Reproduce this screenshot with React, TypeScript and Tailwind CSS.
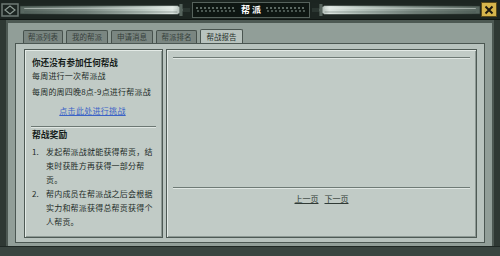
import React from "react";

const font = { fontFamily: '"Noto Sans CJK SC", "Noto Sans", sans-serif' };

function Sword({ flip }: { flip?: boolean }) {
  const id = flip ? "sg2" : "sg1";
  return (
    <svg width="100%" height="14" viewBox="0 0 160 14" preserveAspectRatio="none" style={flip ? { transform: "scaleX(-1)" } : undefined}>
      <defs>
        <linearGradient id={id} x1="0" x2="1" y1="0" y2="0">
          <stop offset="0" stopColor="#56655e" />
          <stop offset="0.4" stopColor="#7d8c85" />
          <stop offset="0.75" stopColor="#b9c7c0" />
          <stop offset="0.92" stopColor="#dfe8e3" />
          <stop offset="1" stopColor="#8a9992" />
        </linearGradient>
      </defs>
      <rect x="0" y="0" width="160" height="14" fill="#1d2622" />
      <polygon points="0,3 148,2.5 156,7 148,11.5 0,11" fill={`url(#${id})`} />
      <polygon points="0,3 148,2.5 156,7 148,11.5 0,11" fill="none" stroke="#2a3530" strokeWidth="0.6" />
      <line x1="4" y1="5.5" x2="148" y2="5" stroke="#eef4f0" strokeOpacity="0.6" strokeWidth="0.8" />
      <line x1="4" y1="9" x2="148" y2="9" stroke="#3d4a44" strokeOpacity="0.5" strokeWidth="0.8" />
      <rect x="150" y="1" width="3" height="12" fill="#56645d" />
      <rect x="153" y="5" width="7" height="4" fill="#2b3631" />
    </svg>
  );
}

function Dots() {
  return (
    <svg width="40" height="6" viewBox="0 0 40 6">
      {Array.from({ length: 10 }).map((_, i) => (
        <g key={i}>
          <rect x={i * 4} y="0" width="2" height="2" fill="#5b6862" />
          <rect x={i * 4 + 1} y="3" width="2" height="2" fill="#4a5751" />
        </g>
      ))}
    </svg>
  );
}

const tabs = [
  { t: "帮派列表", w: "w-[40px]" },
  { t: "我的帮派", w: "w-[42px]" },
  { t: "申请消息", w: "w-[42px]" },
  { t: "帮派排名", w: "w-[41px]" },
];

export default function App() {
  return (
    <div className="w-[500px] h-[256px] bg-[#2f3934] flex flex-col overflow-hidden" style={font}>
      {/* title bar */}
      <div className="h-[20px] flex items-center bg-[#1c2521] border-b border-[#0f1512]">
        <div className="w-[20px] h-[20px] flex items-center justify-center">
          <svg width="18" height="16" viewBox="0 0 18 16">
            <rect x="1" y="2" width="16" height="12" fill="none" stroke="#6d7a74" strokeWidth="1.5" />
            <path d="M4 8 L9 4 L14 8 L9 12 Z" fill="none" stroke="#8c9a93" strokeWidth="1.2" />
          </svg>
        </div>
        <div className="w-[170px] h-[14px]">
          <Sword />
        </div>
        <div className="ml-[2px] w-[118px] h-[16px] bg-[#0e1612] border border-[#56625c] flex items-center justify-center gap-[5px]">
          <Dots />
          <span className="text-white font-bold text-[9px] leading-[9px] whitespace-nowrap">帮&nbsp;派</span>
          <Dots />
        </div>
        <div className="ml-[2px] w-[168px] h-[14px]">
          <Sword flip />
        </div>
        <div className="ml-[1px] w-[16px] h-[15px] bg-[#d6b54c] border border-[#5a4b1a] flex items-center justify-center">
          <svg width="10" height="10" viewBox="0 0 10 10">
            <path d="M1.5 1.5 L8.5 8.5 M8.5 1.5 L1.5 8.5" stroke="#1d1a10" strokeWidth="2" />
          </svg>
        </div>
      </div>
      {/* body */}
      <div className="flex-1 flex px-[6px]">
        <div className="flex-1 flex flex-col bg-[#919e98] border-x-2 border-t-[3px] border-[#4d5953] pb-[3px] px-[7px] pt-[6px]">
          {/* tabs */}
          <div className="h-[14px] flex items-end pl-[8px] gap-[3px]">
            {tabs.map((tb) => (
              <div
                key={tb.t}
                className={`${tb.w} h-[13px] bg-[#7a8681] border border-b-0 border-[#46514c] rounded-t-[2px] flex items-center justify-center text-[7.5px] leading-[8px] text-[#36403b]`}
              >
                {tb.t}
              </div>
            ))}
            <div className="w-[43px] h-[14px] bg-[#b8c3be] border border-b-0 border-[#4a5550] rounded-t-[2px] flex items-center justify-center text-[7.5px] leading-[8px] text-[#262f2b]">
              帮战报告
            </div>
          </div>
          {/* container */}
          <div className="flex-1 bg-[#b8c3be] border border-[#4b5752] flex gap-[3px] pl-[8px] pr-[7px] pt-[5px] pb-[4px]">
            {/* left panel */}
            <div className="w-[139px] bg-[#c1cbc6] border border-[#4e5a55] shadow-[inset_1px_1px_0_#e3eae6,inset_-1px_-1px_0_#8d9994] flex flex-col pl-[7px] pr-[5px] pt-[6px] text-[#232c28]">
              <div className="h-[13px] leading-[13px] text-[8.6px] font-bold text-[#161d1a] whitespace-nowrap">你还没有参加任何帮战</div>
              <div className="h-[14px] leading-[14px] text-[8px] tracking-[0.2px] whitespace-nowrap">每周进行一次帮派战</div>
              <div className="mt-[2px] h-[14px] leading-[14px] text-[8px] tracking-[0.2px] whitespace-nowrap">每周的周四晚8点-9点进行帮派战</div>
              <div className="mt-[5px] h-[14px] leading-[14px] text-[8px] tracking-[0.3px] text-center text-[#3b63c6] underline whitespace-nowrap pr-[4px]">点击此处进行挑战</div>
              <div className="mt-[8px] mr-[1px] -ml-[1px] h-[2px] border-t border-[#6c7873] border-b border-b-[#e0e7e3]" />
              <div className="h-[14px] leading-[14px] text-[8.8px] font-bold text-[#161d1a] whitespace-nowrap">帮战奖励</div>
              <div className="mt-[3px] flex">
                <div className="w-[14px] h-[14px] leading-[14px] text-[8px]">1.</div>
                <div className="flex flex-col text-[8px] tracking-[0.2px]">
                  <div className="h-[14px] leading-[14px] whitespace-nowrap">发起帮派战就能获得帮贡，结</div>
                  <div className="h-[14px] leading-[14px] whitespace-nowrap">束时获胜方再获得一部分帮</div>
                  <div className="h-[14px] leading-[14px] whitespace-nowrap">贡。</div>
                </div>
              </div>
              <div className="flex">
                <div className="w-[14px] h-[14px] leading-[14px] text-[8px]">2.</div>
                <div className="flex flex-col text-[8px] tracking-[0.2px]">
                  <div className="h-[14px] leading-[14px] whitespace-nowrap">帮内成员在帮派战之后会根据</div>
                  <div className="h-[14px] leading-[14px] whitespace-nowrap">实力和帮派获得总帮贡获得个</div>
                  <div className="h-[14px] leading-[14px] whitespace-nowrap">人帮贡。</div>
                </div>
              </div>
            </div>
            {/* right panel */}
            <div className="flex-1 bg-[#c1cbc6] border border-[#4e5a55] shadow-[inset_1px_1px_0_#e3eae6,inset_-1px_-1px_0_#8d9994] flex flex-col px-[6px] pt-[7px]">
              <div className="h-[2px] border-t border-[#6f7b76] border-b border-b-[#e0e7e3]" />
              <div className="flex-1" />
              <div className="h-[2px] border-t border-[#6f7b76] border-b border-b-[#e0e7e3]" />
              <div className="h-[17px] flex items-center justify-center gap-[6px] text-[8px] text-[#303a35] pt-[2px]">
                <span className="underline">上一页</span>
                <span className="underline">下一页</span>
              </div>
              <div className="h-[31px]" />
            </div>
          </div>
        </div>
      </div>
      <div className="h-[10px] bg-[#3a4540] border-t border-[#1f2824]" />
    </div>
  );
}
